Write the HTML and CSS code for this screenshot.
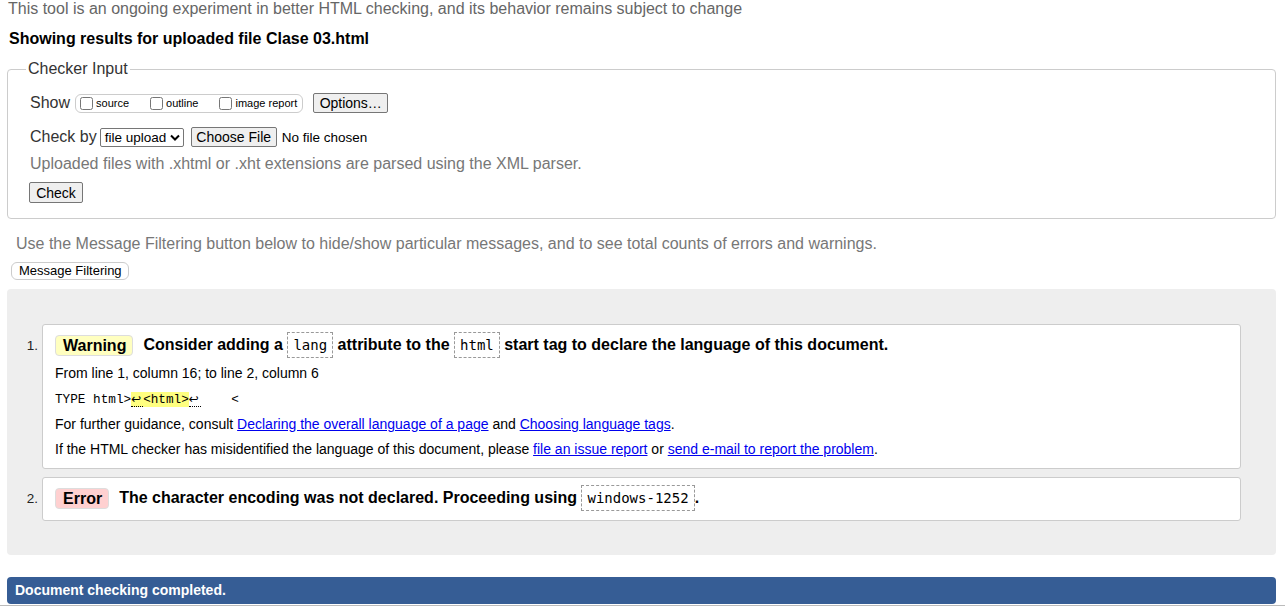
FILE: index.html
```html
<!DOCTYPE html>
<html>
<head>
<meta charset="utf-8">
<link rel="stylesheet" href="styles.css">
</head>
<body>
<p class="intro">This tool is an ongoing experiment in better HTML checking, and its behavior remains subject to change</p>
<h2 class="results">Showing results for uploaded file Clase 03.html</h2>
<fieldset class="checker">
  <legend>Checker Input</legend>
  <div class="row show-row">
    <span class="label">Show</span>
    <span class="show-box">
      <label class="opt"><input type="checkbox">source</label>
      <label class="opt"><input type="checkbox">outline</label>
      <label class="opt"><input type="checkbox">image report</label>
    </span>
    <span class="btn options">Options…</span>
  </div>
  <div class="row checkby-row">
    <span class="label">Check by</span>
    <span class="select">file upload<svg class="chev" width="10" height="7" viewBox="0 0 10 7"><path d="M1 1.5 L5 5.5 L9 1.5" fill="none" stroke="#000" stroke-width="2"/></svg></span>
    <span class="btn choose">Choose File</span>
    <span class="nofile">No file chosen</span>
  </div>
  <p class="note">Uploaded files with .xhtml or .xht extensions are parsed using the XML parser.</p>
  <div class="row check-row"><span class="btn check">Check</span></div>
</fieldset>
<p class="filter-note">Use the Message Filtering button below to hide/show particular messages, and to see total counts of errors and warnings.</p>
<div class="filter-row"><span class="filter-btn">Message Filtering</span></div>
<div class="results-panel">
  <ol class="messages">
    <li class="msg">
      <span class="num">1.</span>
      <div class="msg-box">
        <p class="msg-title"><strong class="badge warning">Warning</strong><span class="msg-text">Consider adding a <code class="term">lang</code> attribute to the <code class="term">html</code> start tag to declare the language of this document.</span></p>
        <p class="line">From line 1, column 16; to line 2, column 6</p>
        <p class="line extract"><code>TYPE html&gt;<mark><b class="lf">↩</b>&lt;html&gt;</mark><b class="lf">↩</b>    &lt;</code></p>
        <p class="line">For further guidance, consult <a href="#">Declaring the overall language of a page</a> and <a href="#">Choosing language tags</a>.</p>
        <p class="line">If the HTML checker has misidentified the language of this document, please <a href="#">file an issue report</a> or <a href="#">send e-mail to report the problem</a>.</p>
      </div>
    </li>
    <li class="msg">
      <span class="num">2.</span>
      <div class="msg-box">
        <p class="msg-title"><strong class="badge error">Error</strong><span class="msg-text">The character encoding was not declared. Proceeding using <code class="term">windows-1252</code>.</span></p>
      </div>
    </li>
  </ol>
</div>
<div class="done">Document checking completed.</div>
<div class="rule"></div>
</body>
</html>
```

FILE: styles.css
```css
html, body {
  margin: 0;
  padding: 0;
  background: #fff;
}
body {
  padding: 0 9px 0 7px;
  font-family: "Liberation Sans", Arial, sans-serif;
  color: #000;
  overflow: hidden;
}
.intro {
  margin: 0 0 0 1px;
  color: #666;
  font-size: 16px;
  line-height: 18px;
}
.results {
  margin: 12px 0 0 2px;
  font-size: 16px;
  line-height: 18px;
  font-weight: bold;
}
.checker {
  margin: 12px 0 0 0;
  padding: 12px 22px 15px 22px;
  border: 1px solid #ccc;
  border-radius: 4px;
  min-width: 0;
}
.checker legend {
  padding: 0 2px;
  margin-left: -4px;
  font-size: 16px;
  line-height: 18px;
  color: #333;
}
.row {
  display: flex;
  align-items: center;
}
.label {
  font-size: 16px;
  color: #333;
}
.show-row {
  height: 22px;
  margin-top: 2px;
}
.show-box {
  display: flex;
  align-items: center;
  height: 17px;
  margin-left: 5px;
  padding: 0 5px 0 4px;
  border: 1px solid #ccc;
  border-radius: 6px;
}
.opt {
  display: flex;
  align-items: center;
  font-size: 11px;
  color: #000;
  margin-right: 21px;
}
.opt:last-child { margin-right: 0; }
.opt input {
  margin: 0 3px 0 0;
  width: 13px;
  height: 13px;
}
.btn {
  display: inline-flex;
  align-items: center;
  justify-content: center;
  box-sizing: border-box;
  background: #efefef;
  border: 1px solid #767676;
  border-radius: 2px;
  font-size: 14px;
  color: #000;
}
.options {
  margin-left: 10px;
  width: 75px;
  height: 20px;
}
.checkby-row {
  margin-top: 13px;
  height: 20px;
}
.select {
  display: inline-flex;
  align-items: center;
  box-sizing: border-box;
  margin-left: 3px;
  height: 19px;
  width: 84px;
  padding: 0 0 0 4px;
  border: 1px solid #767676;
  border-radius: 2px;
  font-size: 13.5px;
}
.chev { margin-left: 4px; }
.choose {
  margin-left: 7px;
  width: 86px;
  height: 20px;
}
.nofile {
  margin-left: 5px;
  font-size: 13.5px;
}
.note {
  margin: 7px 0 0 0;
  color: #777;
  font-size: 16px;
  line-height: 20px;
}
.check-row { margin-top: 8px; }
.check {
  width: 54px;
  height: 21px;
  margin-left: -1px;
}
.filter-note {
  margin: 15px 0 0 9px;
  color: #777;
  font-size: 16px;
  line-height: 20px;
}
.filter-row {
  margin-top: 7px;
  margin-left: 4px;
}
.filter-btn {
  display: inline-flex;
  align-items: center;
  box-sizing: border-box;
  height: 18px;
  padding: 0 6px 0 7px;
  border: 1px solid #ccc;
  border-radius: 6px;
  font-size: 13px;
}
.results-panel {
  margin-top: 9px;
  background: #eee;
  border-radius: 4px;
  padding: 35px 35px 34px 0;
}
.messages {
  list-style: none;
  margin: 0;
  padding: 0;
}
.msg {
  display: flex;
  align-items: flex-start;
}
.msg + .msg { margin-top: 8px; }
.num {
  width: 34px;
  text-align: right;
  padding-right: 3px;
  box-sizing: border-box;
  font-size: 13.5px;
  color: #222;
  margin-top: 14px;
}
.msg-box {
  flex: 1;
  margin-left: 1px;
  background: #fff;
  border: 1px solid #ccc;
  border-radius: 3px;
  padding: 9px 12px 6px 12px;
}
.msg:nth-child(2) .msg-box { padding-bottom: 9px; padding-top: 9px; }
.msg-title {
  margin: 0;
  display: flex;
  align-items: center;
  height: 24px;
  font-size: 16px;
}
.badge {
  display: inline-flex;
  align-items: center;
  box-sizing: border-box;
  height: 21px;
  padding: 0 6px 0 7px;
  border: 1px solid #ddd;
  border-radius: 4px;
  font-size: 16px;
  font-weight: bold;
}
.warning { background: #ffffc0; }
.error { background: #ffd0d0; }
.msg-text {
  margin-left: 10px;
  font-weight: bold;
  white-space: nowrap;
}
.term {
  display: inline-block;
  font-family: "DejaVu Sans Mono", "Liberation Mono", monospace;
  font-weight: normal;
  font-size: 14px;
  line-height: 24px;
  padding: 0 5px;
  border: 1px dashed #999;
  vertical-align: middle;
  margin-top: -2px;
}
.line {
  margin: 0;
  font-size: 14px;
  line-height: 25px;
}
.line:nth-child(2) { margin-top: 3px; }
.extract code {
  font-family: "Liberation Mono", "DejaVu Sans Mono", monospace;
  font-size: 12.7px;
  white-space: pre;
}
.extract mark {
  background: #ffff80;
}
.lf {
  display: inline-block;
  width: 12px;
  line-height: 14px;
  font-weight: normal;
  font-family: "DejaVu Sans", sans-serif;
  font-size: 12px;
  border-bottom: 1px dotted #000;
}
a {
  color: #00e;
  text-decoration: underline;
}
.done {
  margin-top: 22px;
  height: 27px;
  box-sizing: border-box;
  padding: 0 8px;
  display: flex;
  align-items: center;
  background: #365d95;
  border-radius: 4px;
  color: #fff;
  font-size: 14px;
  font-weight: bold;
}
.rule {
  margin: 1px -9px 0 -7px;
  border-top: 1px solid #bbb;
  height: 3px;
}
```
